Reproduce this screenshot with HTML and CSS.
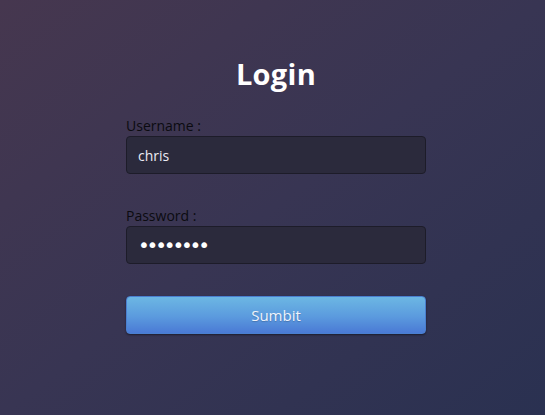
FILE: index.html
```html
<!DOCTYPE html>
<html lang="en">
<head>
<meta charset="utf-8">
<title>Login</title>
<link rel="stylesheet" href="styles.css">
</head>
<body>
<main class="page">
  <form class="login">
    <h1 class="title">Login</h1>
    <label class="label" for="user">Username :</label>
    <input class="field" id="user" type="text" value="chris">
    <label class="label label-gap" for="pass">Password :</label>
    <input class="field field-secret" id="pass" type="password" value="password">
    <button class="submit" type="button">Sumbit</button>
  </form>
</main>
</body>
</html>
```
FILE: styles.css
```css
html, body {
  margin: 0;
  height: 100%;
}
body {
  background: linear-gradient(to bottom right, #46374f 0%, #383553 50%, #2a3151 100%);
  font-family: "Open Sans", "Liberation Sans", sans-serif;
  overflow: hidden;
}
.page {
  display: flex;
  justify-content: center;
  padding-left: 7px;
  padding-top: 54px;
}
.login {
  width: 300px;
  display: flex;
  flex-direction: column;
}
.title {
  margin: 0 0 22px;
  font-size: 29px;
  line-height: 40px;
  font-weight: 700;
  color: #ffffff;
  text-align: center;
  letter-spacing: 0.3px;
}
.label {
  font-size: 14px;
  line-height: 19px;
  color: #0b0b10;
  margin-bottom: 1px;
}
.label-gap {
  margin-top: 32px;
}
.field {
  box-sizing: border-box;
  height: 38px;
  width: 100%;
  margin: 0;
  padding: 0 11px;
  background: #2b2a3c;
  border: 1px solid #1d1c29;
  border-radius: 4px;
  color: #eceaf4;
  font-family: "Open Sans", sans-serif;
  font-size: 14px;
  outline: none;
}
.field-secret {
  font-family: "DejaVu Sans", sans-serif;
  font-size: 20px;
  letter-spacing: -3.2px;
  color: #ffffff;
}
.submit {
  margin-top: 32px;
  height: 38px;
  width: 100%;
  border: 1px solid #4a7fcf;
  border-radius: 4px;
  background: linear-gradient(to bottom, #6cb7e3 0%, #5b9ade 55%, #4a7ad5 100%);
  box-shadow: 0 1px 2px rgba(0, 0, 0, 0.45);
  color: #eef3fb;
  font-family: "Open Sans", sans-serif;
  font-size: 15px;
  text-shadow: 0 1px 1px rgba(0, 0, 0, 0.2);
  cursor: pointer;
}
```
